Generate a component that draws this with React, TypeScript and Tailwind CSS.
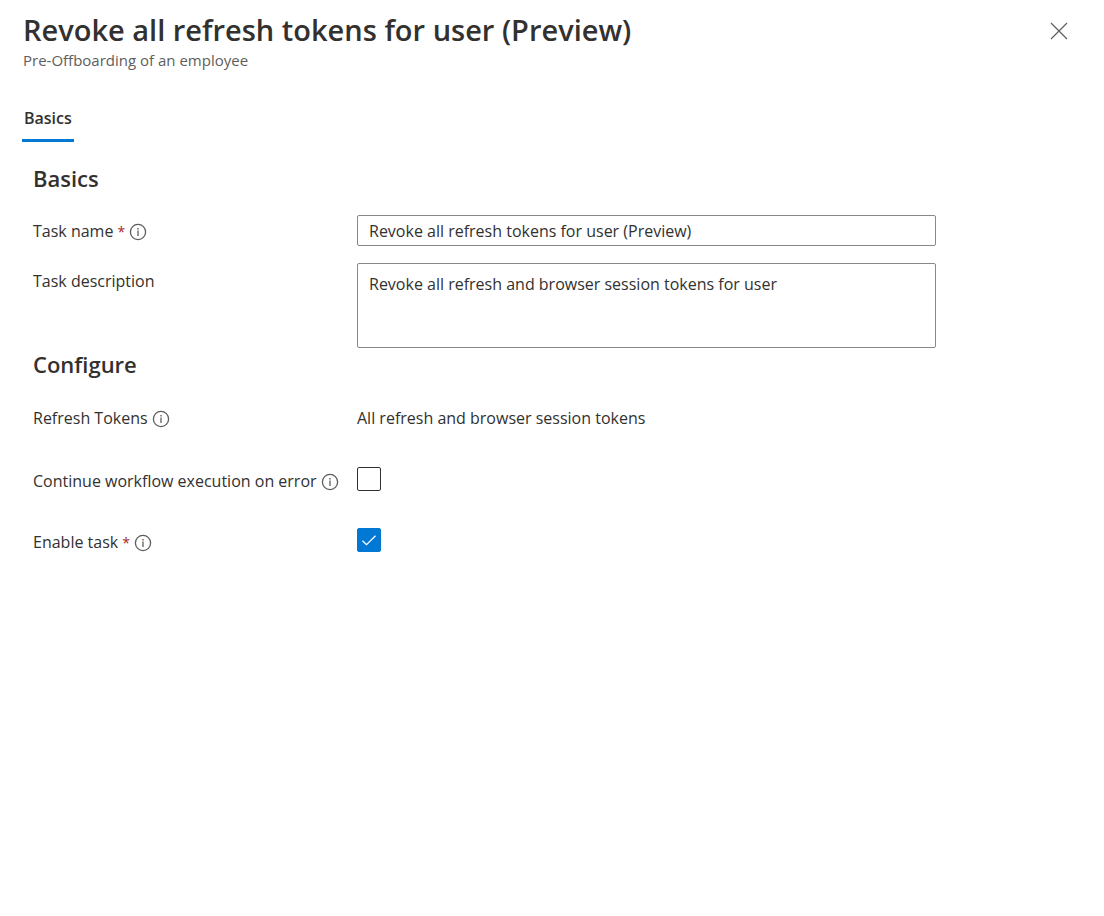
import { useState } from "react";
import type { ReactNode } from "react";

function Info({ label }: { label: string }) {
  return (
    <button type="button" aria-label={label} className="ml-1 mt-0.5 flex shrink-0">
      <svg width="18" height="18" viewBox="0 0 18 18" fill="none" stroke="#605e5c" aria-hidden="true">
        <circle cx="9" cy="9" r="7.6" strokeWidth="1.3" />
        <path d="M9 7.6v5.4" strokeWidth="1.3" />
        <path d="M9 5v1.4" strokeWidth="1.4" />
      </svg>
    </button>
  );
}

function Required() {
  return <span className="ml-1 text-sm text-[#a4262c]">*</span>;
}

function LabelCell({ info, children }: { info: string; children: ReactNode }) {
  return (
    <div className="flex w-[324px] shrink-0 items-center whitespace-nowrap">
      {children}
      <Info label={info} />
    </div>
  );
}

type CheckboxProps = { id: string; checked: boolean; onChange: (checked: boolean) => void };

function Checkbox({ id, checked, onChange }: CheckboxProps) {
  return (
    <span className="grid h-6 w-6 place-items-center">
      <input
        id={id}
        type="checkbox"
        checked={checked}
        onChange={(e) => onChange(e.target.checked)}
        className="col-start-1 row-start-1 h-6 w-6 appearance-none rounded-xs border border-[#323130] bg-white checked:border-[#0078d4] checked:bg-[#0078d4]"
      />
      {checked && (
        <svg width="16" height="16" viewBox="0 0 16 16" fill="none" stroke="#fff" strokeWidth="1.3" aria-hidden="true" className="pointer-events-none col-start-1 row-start-1">
          <path d="M1.5 8.7l4 4 9-9" />
        </svg>
      )}
    </span>
  );
}

export default function App() {
  const [name, setName] = useState("Revoke all refresh tokens for user (Preview)");
  const [description, setDescription] = useState("Revoke all refresh and browser session tokens for user");
  const [continueOnError, setContinueOnError] = useState(false);
  const [enabled, setEnabled] = useState(true);

  return (
    <main className="min-h-screen bg-white font-['Open_Sans','Noto_Sans',sans-serif] text-base text-[#323130]">
      <header className="flex items-start justify-between pt-2.5 pr-9 pl-[23px]">
        <div>
          <h1 className="text-[29px] leading-10 font-semibold">Revoke all refresh tokens for user (Preview)</h1>
          <p className="text-[15px] leading-5 text-[#605e5c]">Pre-Offboarding of an employee</p>
        </div>
        <button type="button" aria-label="Close" className="mt-3 flex">
          <svg width="18" height="18" viewBox="0 0 18 18" stroke="#605e5c" strokeWidth="1.2" aria-hidden="true">
            <path d="M1 1l16 16M17 1L1 17" />
          </svg>
        </button>
      </header>
      <div role="tablist" className="mt-6 flex pl-[22px]">
        <button type="button" role="tab" aria-selected="true" className="h-12 border-b-3 border-[#0078d4] px-0.5 pt-0.5 text-base font-semibold">
          Basics
        </button>
      </div>
      <form className="px-[33px]">
        <h2 className="pt-5 text-[22px] leading-8 font-semibold">Basics</h2>
        <div className="mt-[21px] flex items-center">
          <LabelCell info="About task name">
            <label htmlFor="name">Task name<Required /></label>
          </LabelCell>
          <input id="name" value={name} onChange={(e) => setName(e.target.value)} className="h-[31px] w-full max-w-[579px] rounded-xs border border-[#8a8886] px-[11px] outline-none" />
        </div>
        <div className="mt-[17px] flex items-start">
          <label htmlFor="description" className="w-[324px] shrink-0 pt-1.5">Task description</label>
          <textarea id="description" value={description} onChange={(e) => setDescription(e.target.value)} className="block h-[85px] w-full max-w-[579px] resize-none rounded-xs border border-[#8a8886] px-[11px] py-2 outline-none" />
        </div>
        <h2 className="text-[22px] leading-8 font-semibold">Configure</h2>
        <div className="mt-[26px] flex items-center">
          <LabelCell info="About refresh tokens">
            <span>Refresh Tokens</span>
          </LabelCell>
          <p>All refresh and browser session tokens</p>
        </div>
        <div className="mt-[37px] flex items-start">
          <div className="pt-0.5">
            <LabelCell info="About continuing on error">
              <label htmlFor="continue">Continue workflow execution on error</label>
            </LabelCell>
          </div>
          <Checkbox id="continue" checked={continueOnError} onChange={setContinueOnError} />
        </div>
        <div className="mt-[35px] flex items-start">
          <div className="pt-0.5">
            <LabelCell info="About enabling the task">
              <label htmlFor="enable">Enable task<Required /></label>
            </LabelCell>
          </div>
          <Checkbox id="enable" checked={enabled} onChange={setEnabled} />
        </div>
      </form>
    </main>
  );
}
